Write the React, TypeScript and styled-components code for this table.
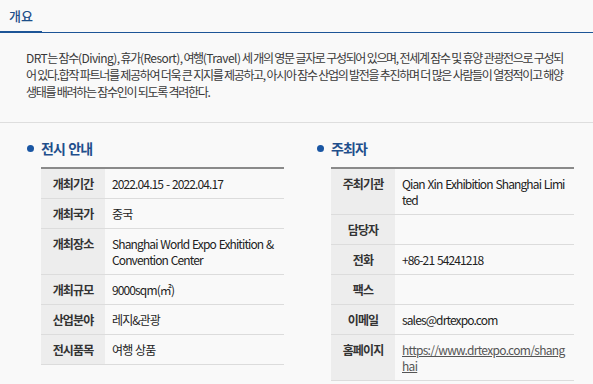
import React from "react";
import styled, { createGlobalStyle } from "styled-components";

const Global = createGlobalStyle`
  html, body { margin: 0; padding: 0; background: #f9f9f9; }
  body {
    font-family: "Noto Sans CJK KR", "Noto Sans", sans-serif;
    color: #333;
    letter-spacing: -0.88px;
    word-spacing: 0.96px;
  }
  * { box-sizing: border-box; }
`;

const Page = styled.div`
  width: 593px;
  min-height: 384px;
  background: #f9f9f9;
`;

const TabBar = styled.div`
  display: flex;
  height: 33px;
  border-bottom: 1px solid #1d5597;
`;

const Tab = styled.div`
  padding: 0 9px;
  display: flex;
  align-items: center;
  font-size: 13px;
  font-weight: 500;
  letter-spacing: 0;
  color: #1d4f8a;
  border-bottom: 2px solid #1d5597;
  margin-bottom: -1px;
`;

const Intro = styled.p`
  margin: 0;
  padding: 16px 22px 22px 26px;
  font-size: 12px;
  line-height: 17px;
  color: #383838;
  letter-spacing: -1.32px;
  word-spacing: 0.24px;
  word-break: break-all;
  border-bottom: 1px solid #dedede;
`;

const Latin = styled.span`
  letter-spacing: -0.56px;
`;

const Columns = styled.div`
  display: grid;
  grid-template-columns: 243px 243px;
  column-gap: 47px;
  padding: 15px 0 7px 41px;
`;

const Section = styled.section`
  display: flex;
  flex-direction: column;
`;

const Title = styled.h3`
  margin: 0 0 9px -14px;
  display: flex;
  align-items: center;
  gap: 7px;
  font-size: 14px;
  font-weight: 700;
  line-height: 20px;
  color: #1f4f8c;
`;

const Dot = styled.span`
  width: 7px;
  height: 7px;
  border-radius: 50%;
  background: #1a56a3;
  flex: none;
`;

const Table = styled.div`
  border-top: 2px solid #8a8a8a;
  display: grid;
  grid-template-columns: 64px 1fr;
`;

const Label = styled.div`
  background: #ededed;
  padding: 7px 0 6px;
  text-align: center;
  font-size: 12px;
  font-weight: 700;
  line-height: 16px;
  color: #333;
  border-bottom: 1px solid #dcdcdc;
`;

const Value = styled.div`
  padding: 7px 7px 6px 7px;
  font-size: 12px;
  line-height: 16px;
  color: #222;
  word-break: break-all;
  border-bottom: 1px solid #dcdcdc;
  min-height: 30px;
`;

const Link = styled.a`
  color: #555;
  letter-spacing: -0.7px;
  text-decoration: underline;
`;

type Row = { label: string; value?: React.ReactNode };

const left: Row[] = [
  { label: "개최기간", value: "2022.04.15 - 2022.04.17" },
  { label: "개최국가", value: "중국" },
  { label: "개최장소", value: "Shanghai World Expo Exhitition & Convention Center" },
  { label: "개최규모", value: "9000sqm(㎡)" },
  { label: "산업분야", value: "레지&관광" },
  { label: "전시품목", value: "여행 상품" },
];

const right: Row[] = [
  { label: "주최기관", value: "Qian Xin Exhibition Shanghai Limited" },
  { label: "담당자", value: "" },
  { label: "전화", value: "+86-21 54241218" },
  { label: "팩스", value: "" },
  { label: "이메일", value: "sales@drtexpo.com" },
  {
    label: "홈페이지",
    value: <Link href="#">https://www.drtexpo.com/shanghai</Link>,
  },
];

function InfoTable({ rows }: { rows: Row[] }) {
  return (
    <Table>
      {rows.map((r) => (
        <React.Fragment key={r.label}>
          <Label>{r.label}</Label>
          <Value>{r.value}</Value>
        </React.Fragment>
      ))}
    </Table>
  );
}

export default function App() {
  return (
    <Page>
      <Global />
      <TabBar>
        <Tab>개요</Tab>
      </TabBar>
      <Intro>
        <Latin>DRT</Latin>는 잠수<Latin>(Diving)</Latin>, 휴가<Latin>(Resort)</Latin>, 여행
        <Latin>(Travel)</Latin> 세 개의 영문 글자로 구성되어 있으며, 전세계 잠수 및 휴양 관광전으로 구성되어
        있다.합작 파트너를 제공하여 더욱 큰 지지를 제공하고, 아시아 잠수 산업의 발전을 추진하며 더 많은
        사람들이 열정적이고 해양 생태를 배려하는 잠수인이 되도록 격려한다.
      </Intro>
      <Columns>
        <Section>
          <Title>
            <Dot />
            전시 안내
          </Title>
          <InfoTable rows={left} />
        </Section>
        <Section>
          <Title>
            <Dot />
            주최자
          </Title>
          <InfoTable rows={right} />
        </Section>
      </Columns>
    </Page>
  );
}
